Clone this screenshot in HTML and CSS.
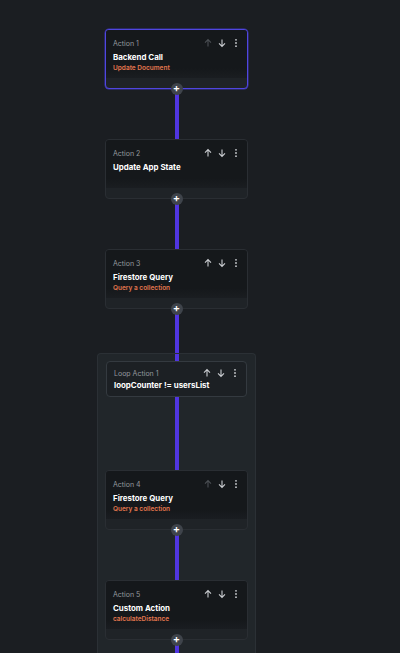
FILE: index.html
```html
<!DOCTYPE html>
<html>
<head>
<meta charset="utf-8">
<link rel="stylesheet" href="styles.css">
</head>
<body>
<div class="flow">
  <div class="card selected">
    <div class="card-body">
      <div class="head"><span class="label">Action 1</span>
        <span class="icons"><svg class="ic dim" viewBox="0 0 10 10"><path d="M5 8.5V1.8M2 4.6 5 1.6 8 4.6"/></svg><svg class="ic" viewBox="0 0 10 10"><path d="M5 1.5V8.2M2 5.4 5 8.4 8 5.4"/></svg><svg class="ic dots" viewBox="0 0 10 10"><circle cx="5" cy="1.8" r="0.9"/><circle cx="5" cy="5" r="0.9"/><circle cx="5" cy="8.2" r="0.9"/></svg></span>
      </div>
      <div class="title">Backend Call</div>
      <div class="sub">Update Document</div>
    </div>
    <div class="card-foot"></div>
    <div class="plus">+</div>
  </div>
  <div class="line"></div>
  <div class="card">
    <div class="card-body">
      <div class="head"><span class="label">Action 2</span>
        <span class="icons"><svg class="ic" viewBox="0 0 10 10"><path d="M5 8.5V1.8M2 4.6 5 1.6 8 4.6"/></svg><svg class="ic" viewBox="0 0 10 10"><path d="M5 1.5V8.2M2 5.4 5 8.4 8 5.4"/></svg><svg class="ic dots" viewBox="0 0 10 10"><circle cx="5" cy="1.8" r="0.9"/><circle cx="5" cy="5" r="0.9"/><circle cx="5" cy="8.2" r="0.9"/></svg></span>
      </div>
      <div class="title">Update App State</div>
    </div>
    <div class="card-foot"></div>
    <div class="plus">+</div>
  </div>
  <div class="line"></div>
  <div class="card">
    <div class="card-body">
      <div class="head"><span class="label">Action 3</span>
        <span class="icons"><svg class="ic" viewBox="0 0 10 10"><path d="M5 8.5V1.8M2 4.6 5 1.6 8 4.6"/></svg><svg class="ic" viewBox="0 0 10 10"><path d="M5 1.5V8.2M2 5.4 5 8.4 8 5.4"/></svg><svg class="ic dots" viewBox="0 0 10 10"><circle cx="5" cy="1.8" r="0.9"/><circle cx="5" cy="5" r="0.9"/><circle cx="5" cy="8.2" r="0.9"/></svg></span>
      </div>
      <div class="title">Firestore Query</div>
      <div class="sub">Query a collection</div>
    </div>
    <div class="card-foot"></div>
    <div class="plus">+</div>
  </div>
  <div class="line short"></div>
  <div class="loop">
    <div class="line tiny"></div>
    <div class="loop-card">
      <div class="head"><span class="label">Loop Action 1</span>
        <span class="icons"><svg class="ic" viewBox="0 0 10 10"><path d="M5 8.5V1.8M2 4.6 5 1.6 8 4.6"/></svg><svg class="ic" viewBox="0 0 10 10"><path d="M5 1.5V8.2M2 5.4 5 8.4 8 5.4"/></svg><svg class="ic dots" viewBox="0 0 10 10"><circle cx="5" cy="1.8" r="0.9"/><circle cx="5" cy="5" r="0.9"/><circle cx="5" cy="8.2" r="0.9"/></svg></span>
      </div>
      <div class="title">loopCounter != usersList</div>
    </div>
    <div class="line long"></div>
    <div class="card">
      <div class="card-body">
        <div class="head"><span class="label">Action 4</span>
          <span class="icons"><svg class="ic dim" viewBox="0 0 10 10"><path d="M5 8.5V1.8M2 4.6 5 1.6 8 4.6"/></svg><svg class="ic" viewBox="0 0 10 10"><path d="M5 1.5V8.2M2 5.4 5 8.4 8 5.4"/></svg><svg class="ic dots" viewBox="0 0 10 10"><circle cx="5" cy="1.8" r="0.9"/><circle cx="5" cy="5" r="0.9"/><circle cx="5" cy="8.2" r="0.9"/></svg></span>
        </div>
        <div class="title">Firestore Query</div>
        <div class="sub">Query a collection</div>
      </div>
      <div class="card-foot"></div>
      <div class="plus">+</div>
    </div>
    <div class="line"></div>
    <div class="card">
      <div class="card-body">
        <div class="head"><span class="label">Action 5</span>
          <span class="icons"><svg class="ic" viewBox="0 0 10 10"><path d="M5 8.5V1.8M2 4.6 5 1.6 8 4.6"/></svg><svg class="ic" viewBox="0 0 10 10"><path d="M5 1.5V8.2M2 5.4 5 8.4 8 5.4"/></svg><svg class="ic dots" viewBox="0 0 10 10"><circle cx="5" cy="1.8" r="0.9"/><circle cx="5" cy="5" r="0.9"/><circle cx="5" cy="8.2" r="0.9"/></svg></span>
        </div>
        <div class="title">Custom Action</div>
        <div class="sub">calculateDistance</div>
      </div>
      <div class="card-foot"></div>
      <div class="plus">+</div>
    </div>
    <div class="line"></div>
  </div>
</div>
</body>
</html>
```
FILE: styles.css
```css
html, body {
  margin: 0;
  padding: 0;
  background: #1b1e22;
  height: 100%;
  overflow: hidden;
}
body {
  font-family: Inter, "Liberation Sans", sans-serif;
  color: #fff;
}
.flow {
  display: flex;
  flex-direction: column;
  align-items: center;
  width: 143px;
  margin-left: 105px;
  padding-top: 29px;
}
.card {
  position: relative;
  box-sizing: border-box;
  width: 143px;
  height: 60px;
  border: 1px solid #2a2e33;
  border-radius: 4px;
  background: #1f2327;
  display: flex;
  flex-direction: column;
}
.card.selected {
  border-color: #5046e0;
  box-shadow: 0 0 0 0.5px #3b35a8;
}
.card-body {
  flex: 1;
  background: linear-gradient(#15181b, #15181b 80%, #1a1d21);
  border-radius: 3px 3px 0 0;
  padding: 5px 8px 0 7px;
}
.card-foot {
  height: 10px;
}
.head {
  display: flex;
  align-items: center;
  justify-content: space-between;
  height: 16px;
}
.label {
  font-size: 7px;
  color: #94989e;
}
.icons {
  display: flex;
  gap: 4px;
  margin-right: -2px;
}
.ic {
  width: 10px;
  height: 10px;
  fill: none;
  stroke: #c9ccd0;
  stroke-width: 1.1;
}
.ic.dim {
  stroke: #4a4e53;
}
.ic.dots {
  stroke: none;
  fill: #c9ccd0;
}
.title {
  font-size: 7.9px;
  font-weight: 700;
  line-height: 10px;
  margin-top: 1px;
}
.sub {
  font-size: 6.5px;
  font-weight: 600;
  color: #e3774f;
  line-height: 10px;
  margin-top: 1px;
}
.plus {
  position: absolute;
  left: 50%;
  bottom: -7px;
  width: 12px;
  height: 12px;
  margin-left: -6px;
  border-radius: 50%;
  background: #3f444b;
  color: #fff;
  font-size: 11px;
  font-weight: 600;
  line-height: 11px;
  text-align: center;
  z-index: 2;
}
.line {
  width: 4px;
  height: 50px;
  background: #5035e0;
}
.line.short {
  height: 44px;
}
.line.tiny {
  height: 7px;
}
.line.long {
  height: 73px;
}
.loop {
  width: 159px;
  box-sizing: border-box;
  border: 1px solid #2b3035;
  border-bottom: none;
  border-radius: 4px 4px 0 0;
  background: #21262a;
  display: flex;
  flex-direction: column;
  align-items: center;
  padding-bottom: 40px;
}
.loop-card {
  box-sizing: border-box;
  width: 141px;
  height: 36px;
  border: 1px solid #343a40;
  border-radius: 4px;
  background: #1c2024;
  padding: 4px 8px 0 7px;
}
.loop-card .head {
  height: 14px;
}
.loop-card .title {
  margin-top: 0;
}
```
